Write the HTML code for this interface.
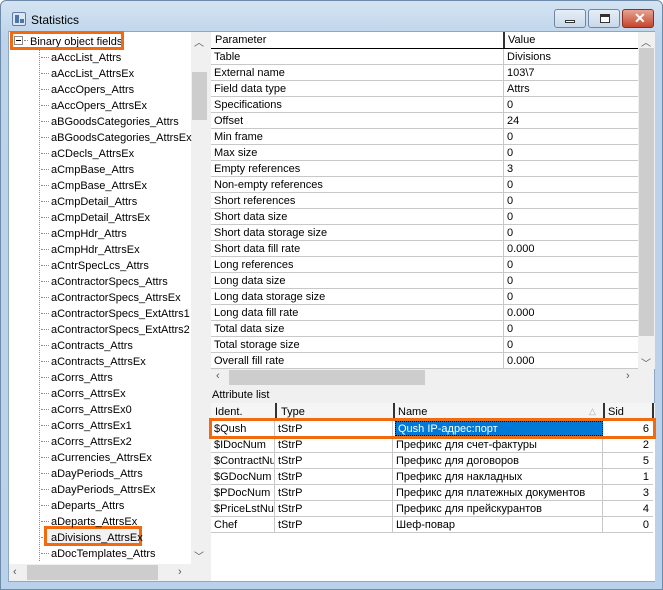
<!DOCTYPE html>
<html><head><meta charset="utf-8"><style>
*{margin:0;padding:0;box-sizing:border-box}
body{width:663px;height:590px;overflow:hidden;font-family:"Liberation Sans",sans-serif;font-size:11px;color:#000;background:#fff}
.win{position:absolute;left:0;top:0;width:663px;height:590px;background:linear-gradient(#d4e3f2,#bcd3ea 40px,#b9d1ea);border:1px solid #6d8aa8;border-radius:6px 6px 0 0}
.client{position:absolute;left:8px;top:31px;width:647px;height:551px;background:#f0f0f0;border:1px solid #8ea8c4}
.a{position:absolute;white-space:nowrap}
.sb{position:absolute;background:#f0f0f0}
.th{position:absolute;background:#cdcdcd}
.row{position:absolute;height:16px;line-height:17px;border-bottom:1px solid #c8c8c8;white-space:nowrap}
.cell{position:absolute;top:0;height:15px;padding-left:3px;overflow:hidden}
.btn{position:absolute;top:8px;height:19px;border:1px solid #6f87a3;border-radius:3px;background:linear-gradient(#e6eef7,#c9d9ea)}
</style></head><body>
<div class="win">
 <div class="a" style="left:11px;top:11px;width:14px;height:14px;border:1px solid #5b7da6;background:#dbe6f2;border-radius:2px"></div>
 <div class="a" style="left:14px;top:14px;width:4px;height:8px;background:#4f74a6"></div>
 <div class="a" style="left:19px;top:18px;width:4px;height:4px;background:#4f74a6"></div>
 <div class="a" style="left:30px;top:12px;font-size:12px">Statistics</div>
 <div class="btn" style="left:553px;width:32px"><div class="a" style="left:10px;top:10px;width:10px;height:3px;background:#fff;border:1px solid #333"></div></div>
 <div class="btn" style="left:587px;width:32px"><div class="a" style="left:11px;top:4px;width:10px;height:9px;border:1px solid #333;border-top-width:3px;background:#fff"></div></div>
 <div class="btn" style="left:621px;width:32px;background:linear-gradient(#e8a393,#c4452c);border-color:#8a2f1f"><div class="a" style="left:11px;top:0;color:#fff;font-size:14px;font-weight:bold">✕</div></div>
</div>
<div class="client"></div>
<div class="a" style="left:9px;top:32px;width:199px;height:548px;background:#fff"></div>
<div class="sb" style="left:191px;top:32px;width:17px;height:532px"></div>
<div class="th" style="left:192px;top:72px;width:15px;height:48px"></div>
<div class="a" style="left:194px;top:34px;color:#555;font-size:10px">︿</div>
<div class="a" style="left:194px;top:548px;color:#555;font-size:10px">﹀</div>
<div class="sb" style="left:9px;top:564px;width:199px;height:17px"></div>
<div class="th" style="left:27px;top:565px;width:131px;height:15px"></div>
<div class="a" style="left:13px;top:566px;color:#555">‹</div>
<div class="a" style="left:178px;top:566px;color:#555">›</div>
<div class="a" style="left:39px;top:49px;height:512px;border-left:1px dotted #888"></div>
<div class="a" style="left:14px;top:36px;width:9px;height:9px;border:1px solid #888;background:#fff"></div>
<div class="a" style="left:16px;top:40px;width:5px;height:1px;background:#000"></div>
<div class="a" style="left:24px;top:40px;width:4px;border-top:1px dotted #888"></div>
<div class="a" style="left:30px;top:35px;line-height:14px;font-size:11px">Binary object fields</div>
<div class="a" style="left:10px;top:31px;width:114px;height:19px;border:3px solid #f26a10"></div>
<div id="tree"></div>
<div class="a" style="left:44px;top:526px;width:98px;height:20px;border:3px solid #f26a10;background:#f2f2f2"></div>
<div class="a" style="left:211px;top:32px;width:427px;height:337px;background:#fff"></div>
<div class="a" style="left:211px;top:32px;width:427px;height:17px;background:#fff;border-bottom:1px solid #000"></div>
<div class="a" style="left:215px;top:34px">Parameter</div>
<div class="a" style="left:503px;top:32px;width:2px;height:16px;background:#333"></div>
<div class="a" style="left:508px;top:34px">Value</div>
<div id="grid"></div>
<div class="a" style="left:503px;top:49px;width:1px;height:320px;background:#c8c8c8"></div>
<div class="sb" style="left:638px;top:32px;width:17px;height:337px"></div>
<div class="th" style="left:639px;top:48px;width:15px;height:288px"></div>
<div class="a" style="left:641px;top:34px;color:#555;font-size:10px">︿</div>
<div class="a" style="left:641px;top:355px;color:#555;font-size:10px">﹀</div>
<div class="th" style="left:229px;top:370px;width:196px;height:15px"></div>
<div class="a" style="left:216px;top:370px;color:#555">‹</div>
<div class="a" style="left:626px;top:370px;color:#555">›</div>
<div class="a" style="left:212px;top:389px">Attribute list</div>
<div class="a" style="left:211px;top:403px;width:444px;height:178px;background:#fff"></div>
<div class="a" style="left:211px;top:403px;width:444px;height:17px;background:#f5f5f5;border-bottom:1px solid #c8c8c8"></div>
<div class="a" style="left:215px;top:406px">Ident.</div>
<div class="a" style="left:275px;top:403px;width:2px;height:16px;background:#333"></div>
<div class="a" style="left:281px;top:406px">Type</div>
<div class="a" style="left:393px;top:403px;width:2px;height:16px;background:#333"></div>
<div class="a" style="left:398px;top:406px">Name</div>
<div class="a" style="left:589px;top:406px;color:#aaa;font-size:9px">△</div>
<div class="a" style="left:603px;top:403px;width:2px;height:16px;background:#333"></div>
<div class="a" style="left:608px;top:406px">Sid</div>
<div class="a" style="left:652px;top:403px;width:2px;height:16px;background:#333"></div>
<div id="attr"></div>
<div class="a" style="left:395px;top:421px;width:208px;height:15px;background:#0078d7;border:1px dotted #000"></div>
<div class="a" style="left:398px;top:423px;color:#fff">Qush IP-адрес:порт</div>
<div class="a" style="left:209px;top:418px;width:447px;height:21px;border:3px solid #f26a10"></div>
<script>
var t=["aAccList_Attrs","aAccList_AttrsEx","aAccOpers_Attrs","aAccOpers_AttrsEx","aBGoodsCategories_Attrs","aBGoodsCategories_AttrsEx","aCDecls_AttrsEx","aCmpBase_Attrs","aCmpBase_AttrsEx","aCmpDetail_Attrs","aCmpDetail_AttrsEx","aCmpHdr_Attrs","aCmpHdr_AttrsEx","aCntrSpecLcs_Attrs","aContractorSpecs_Attrs","aContractorSpecs_AttrsEx","aContractorSpecs_ExtAttrs1","aContractorSpecs_ExtAttrs2","aContracts_Attrs","aContracts_AttrsEx","aCorrs_Attrs","aCorrs_AttrsEx","aCorrs_AttrsEx0","aCorrs_AttrsEx1","aCorrs_AttrsEx2","aCurrencies_AttrsEx","aDayPeriods_Attrs","aDayPeriods_AttrsEx","aDeparts_Attrs","aDeparts_AttrsEx","aDivisions_AttrsEx","aDocTemplates_Attrs"];
var h="";t.forEach(function(s,i){var y=52+i*16;h+='<div class="a" style="left:41px;top:'+(y+5)+'px;width:8px;border-top:1px dotted #888"></div><div class="a" style="left:51px;top:'+(y)+'px;z-index:2">'+s+'</div>';});
document.getElementById("tree").innerHTML=h;
var g=[["Table","Divisions"],["External name","103\\7"],["Field data type","Attrs"],["Specifications","0"],["Offset","24"],["Min frame","0"],["Max size","0"],["Empty references","3"],["Non-empty references","0"],["Short references","0"],["Short data size","0"],["Short data storage size","0"],["Short data fill rate","0.000"],["Long references","0"],["Long data size","0"],["Long data storage size","0"],["Long data fill rate","0.000"],["Total data size","0"],["Total storage size","0"],["Overall fill rate","0.000"]];
h="";g.forEach(function(r,i){var y=49+i*16;h+='<div class="row" style="left:211px;top:'+y+'px;width:427px"><div class="cell" style="left:0">'+r[0]+'</div><div class="cell" style="left:293px">'+r[1]+'</div></div>';});
document.getElementById("grid").innerHTML=h;
var a=[["$Qush","tStrP","","6"],["$IDocNum","tStrP","Префикс для счет-фактуры","2"],["$ContractNu","tStrP","Префикс для договоров","5"],["$GDocNum","tStrP","Префикс для накладных","1"],["$PDocNum","tStrP","Префикс для платежных документов","3"],["$PriceLstNur","tStrP","Префикс для прейскурантов","4"],["Chef","tStrP","Шеф-повар","0"]];
h="";a.forEach(function(r,i){var y=421+i*16;h+='<div class="row" style="left:211px;top:'+y+'px;width:442px;font-family:\'Liberation Sans\',\'Noto Sans CJK SC\',sans-serif"><div class="cell" style="left:0;width:64px;border-right:1px solid #c8c8c8">'+r[0]+'</div><div class="cell" style="left:64px;width:118px;border-right:1px solid #c8c8c8">'+r[1]+'</div><div class="cell" style="left:182px;width:210px;border-right:1px solid #c8c8c8">'+r[2]+'</div><div class="cell" style="left:392px;width:48px;text-align:right;padding-right:2px">'+r[3]+'</div></div>';});
document.getElementById("attr").innerHTML=h;
</script>
</body></html>
